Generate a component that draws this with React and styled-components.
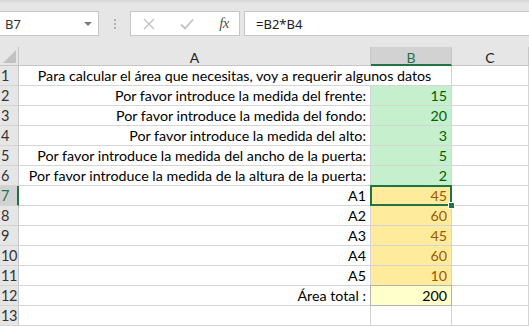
import React from "react";
import styled, { createGlobalStyle } from "styled-components";

const GlobalStyle = createGlobalStyle`
  html, body {
    margin: 0;
    padding: 0;
    background: #ffffff;
    overflow: hidden;
  }
  body {
    font-family: "Lato", "Liberation Sans", sans-serif;
  }
`;

const Frame = styled.div`
  width: 529px;
  height: 326px;
  overflow: hidden;
  background: #ffffff;
`;

const Toolbar = styled.div`
  height: 47px;
  box-sizing: border-box;
  padding-top: 11px;
  display: flex;
  align-items: flex-start;
  background: linear-gradient(#d6d6d6 0px, #e3e3e3 3px, #e6e6e6 5px);
`;

const Field = styled.div`
  box-sizing: border-box;
  height: 25px;
  background: #ffffff;
  border: 1px solid #c6c6c6;
  display: flex;
  align-items: center;
  font-family: "Noto Sans", "Open Sans", sans-serif;
  font-size: 13px;
  color: #333333;
`;

const NameBox = styled(Field)`
  width: 99px;
  border-left: none;
  padding-left: 5px;
  justify-content: space-between;
  padding-right: 6px;
`;

const Arrow = styled.span`
  width: 0;
  height: 0;
  border-left: 4px solid transparent;
  border-right: 4px solid transparent;
  border-top: 4px solid #7a7a7a;
`;

const Grip = styled.div`
  width: 31px;
  height: 25px;
  display: flex;
  flex-direction: column;
  align-items: center;
  justify-content: center;
  gap: 2px;
  span {
    width: 2px;
    height: 2px;
    background: #b4b4b4;
  }
`;

const Buttons = styled(Field)`
  width: 110px;
  padding: 0 10px 0 12px;
  justify-content: space-between;
`;

const FxLabel = styled.span`
  font-family: "Liberation Serif", serif;
  font-style: italic;
  font-size: 15px;
  color: #555555;
  letter-spacing: -0.5px;
`;

const Formula = styled(Field)`
  flex: 1;
  margin-left: 4px;
  border-right: none;
  padding-left: 11px;
  font-size: 13px;
  color: #222222;
`;

const Sheet = styled.div`
  display: grid;
  grid-template-columns: 19px 352px 81px 77px;
  grid-template-rows: 19px;
  grid-auto-rows: 20px;
`;

const Corner = styled.div`
  background: #e6e6e6;
  border-right: 1px solid #c6c6c6;
  border-bottom: 1px solid #c6c6c6;
  box-sizing: border-box;
  display: flex;
  align-items: flex-end;
  justify-content: flex-end;
  padding: 0 2px 2px 0;
  svg {
    display: block;
  }
`;

const ColHead = styled.div`
  box-sizing: border-box;
  background: ${(p) => (p.$active ? "#d2d2d2" : "#e6e6e6")};
  color: ${(p) => (p.$active ? "#217346" : "#222222")};
  border-right: 1px solid #c6c6c6;
  border-bottom: ${(p) => (p.$active ? "2px solid #217346" : "1px solid #c6c6c6")};
  display: flex;
  align-items: center;
  justify-content: center;
  font-size: 14px;
  padding-top: 3px;
`;

const RowHead = styled.div`
  box-sizing: border-box;
  background: ${(p) => (p.$active ? "#d2d2d2" : "#e6e6e6")};
  color: ${(p) => (p.$active ? "#217346" : "#333333")};
  border-right: ${(p) => (p.$active ? "2px solid #217346" : "1px solid #c6c6c6")};
  border-bottom: 1px solid #d4d4d4;
  font-size: 14.5px;
  padding-left: 1px;
  display: flex;
  align-items: flex-end;
  padding-bottom: 1px;
  letter-spacing: -0.3px;
`;

const Cell = styled.div`
  position: relative;
  box-sizing: border-box;
  grid-column: span ${(p) => p.$span || 1};
  background: ${(p) => p.$fill || "#ffffff"};
  color: ${(p) => p.$color || "#000000"};
  border-right: 1px solid ${(p) => (p.$note ? "#b2b2b2" : "#d4d4d4")};
  border-bottom: 1px solid ${(p) => (p.$note ? "#b2b2b2" : "#d4d4d4")};
  border-left: ${(p) => (p.$note ? "1px solid #b2b2b2" : "none")};
  border-top: ${(p) => (p.$note ? "1px solid #b2b2b2" : "none")};
  margin-top: ${(p) => (p.$note ? "-1px" : "0")};
  margin-left: ${(p) => (p.$note ? "-1px" : "0")};
  height: ${(p) => (p.$note ? "21px" : "auto")};
  font-size: 14.25px;
  display: flex;
  align-items: flex-end;
  justify-content: ${(p) =>
    p.$align === "center" ? "center" : p.$align === "right" ? "flex-end" : "flex-start"};
  padding: 0 4px 1px 3px;
  white-space: nowrap;
  ${(p) =>
    p.$selected &&
    `
    &::after {
      content: "";
      position: absolute;
      left: -1px;
      top: -1px;
      right: -1px;
      bottom: -1px;
      border: 2px solid #217346;
      pointer-events: none;
    }
    &::before {
      content: "";
      position: absolute;
      right: -4px;
      bottom: -4px;
      width: 5px;
      height: 5px;
      background: #217346;
      border: 1px solid #ffffff;
      z-index: 2;
    }
  `}
`;

const GREEN = { fill: "#c6efce", color: "#006100" };
const YELLOW = { fill: "#ffeb9c", color: "#9c5700" };

const rows = [
  { a: "Por favor introduce la medida del frente:", b: "15", style: GREEN },
  { a: "Por favor introduce la medida del fondo:", b: "20", style: GREEN },
  { a: "Por favor introduce la medida del alto:", b: "3", style: GREEN },
  { a: "Por favor introduce la medida del ancho de la puerta:", b: "5", style: GREEN },
  { a: "Por favor introduce la medida de la altura de la puerta:", b: "2", style: GREEN },
  { a: "A1", b: "45", style: YELLOW, selected: true },
  { a: "A2", b: "60", style: YELLOW },
  { a: "A3", b: "45", style: YELLOW },
  { a: "A4", b: "60", style: YELLOW },
  { a: "A5", b: "10", style: YELLOW },
  { a: "Área total :", b: "200", style: { fill: "#ffffcc", color: "#000000" }, note: true },
];

const App = () => {
  return (
    <Frame>
      <GlobalStyle />
      <Toolbar>
        <NameBox>
          B7
          <Arrow />
        </NameBox>
        <Grip>
          <span />
          <span />
          <span />
        </Grip>
        <Buttons>
          <svg width="12" height="12" viewBox="0 0 12 12">
            <path d="M1 1 L11 11 M11 1 L1 11" stroke="#c2c2c2" strokeWidth="1.4" fill="none" />
          </svg>
          <svg width="14" height="12" viewBox="0 0 14 12">
            <path d="M1 6.5 L5 10.5 L13 1.5" stroke="#c2c2c2" strokeWidth="1.8" fill="none" />
          </svg>
          <FxLabel>fx</FxLabel>
        </Buttons>
        <Formula>=B2*B4</Formula>
      </Toolbar>

      <Sheet>
        <Corner>
          <svg width="13" height="13" viewBox="0 0 13 13">
            <polygon points="13,0 13,13 0,13" fill="#c2c2c2" />
          </svg>
        </Corner>
        <ColHead>A</ColHead>
        <ColHead $active>B</ColHead>
        <ColHead>C</ColHead>

        <RowHead>1</RowHead>
        <Cell $span={2} $align="center">
          Para calcular el área que necesitas, voy a requerir algunos datos
        </Cell>
        <Cell />

        {rows.map((r, i) => (
          <React.Fragment key={i}>
            <RowHead $active={r.selected}>{i + 2}</RowHead>
            <Cell $align="right">{r.a}</Cell>
            <Cell
              $align="right"
              $fill={r.style.fill}
              $color={r.style.color}
              $selected={r.selected}
              $note={r.note}
            >
              {r.b}
            </Cell>
            <Cell />
          </React.Fragment>
        ))}

        <RowHead>13</RowHead>
        <Cell />
        <Cell />
        <Cell />
      </Sheet>
    </Frame>
  );
};

export default App;
